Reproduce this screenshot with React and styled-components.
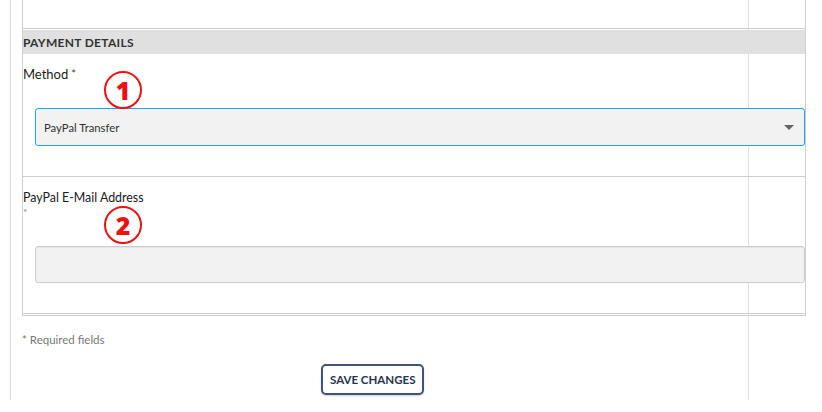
import React from 'react';
import styled, { createGlobalStyle } from 'styled-components';

const GlobalStyle = createGlobalStyle`
  html, body {
    margin: 0;
    padding: 0;
    background: #fff;
    font-family: Lato, 'Open Sans', Arial, sans-serif;
    color: #222;
  }
`;

const Page = styled.div`
  margin-left: 10px;
  width: 812px;
  height: 400px;
  box-sizing: border-box;
  border-left: 1px solid #dcdcdc;
  padding-left: 11px;
  background-image: linear-gradient(to right, transparent 737px, #dedede 737px, #dedede 738px, transparent 738px);
  overflow: hidden;
`;

const Panel = styled.div`
  width: 784px;
  box-sizing: border-box;
  border-left: 1px solid #cfcfcf;
  border-right: 1px solid #cfcfcf;
  border-bottom: 3px double #cfcfcf;
`;

const PrevSection = styled.div`
  height: 28px;
  border-bottom: 1px solid #cdcdcd;
`;

const SectionHeader = styled.div`
  margin-top: 1px;
  height: 24px;
  background: #e0e0e0;
  display: flex;
  align-items: center;
  font-size: 12px;
  font-weight: 700;
  letter-spacing: 0.3px;
  color: #333;
`;

const Field = styled.div`
  position: relative;
  padding: ${(p) => p.$top}px 0 30px 0;
  border-top: ${(p) => (p.$divider ? '1px solid #cdcdcd' : 'none')};
`;

const Label = styled.div`
  font-size: ${(p) => p.$size || 13}px;
  line-height: 16px;
  color: #1a1a1a;
`;

const Star = styled.span`
  font-size: 11px;
  vertical-align: top;
  margin-left: 3px;
  color: #444;
`;

const SubStar = styled.div`
  font-size: 10px;
  line-height: 12px;
  color: #888;
`;

const SelectBox = styled.div`
  margin: ${(p) => p.$gap}px 0 0 12px;
  height: 38px;
  box-sizing: border-box;
  border: 1px solid #1ea1ef;
  border-radius: 3px;
  background: #f2f2f2;
  display: flex;
  align-items: center;
  justify-content: space-between;
  padding: 0 10px 0 8px;
  font-size: 11.3px;
  color: #333;
`;

const Caret = styled.span`
  width: 0;
  height: 0;
  border-left: 5px solid transparent;
  border-right: 5px solid transparent;
  border-top: 5px solid #666;
`;

const TextInput = styled.div`
  margin: ${(p) => p.$gap}px 0 0 12px;
  height: 37px;
  box-sizing: border-box;
  border: 1px solid #cccccc;
  border-radius: 3px;
  background: #f2f2f2;
  box-shadow: inset 0 1px 1px rgba(0, 0, 0, 0.06);
`;

const Marker = styled.div`
  position: absolute;
  left: 81px;
  top: ${(p) => p.$top}px;
  width: 34px;
  height: 34px;
  border: 2px solid #ee1111;
  border-radius: 50%;
  display: flex;
  align-items: center;
  justify-content: center;
  color: #ee1111;
  font-family: 'Open Sans', Arial, sans-serif;
  font-weight: 800;
  font-size: 25px;
  line-height: 1;
  background: transparent;
`;

const Footer = styled.div`
  padding-top: 17px;
`;

const Required = styled.div`
  font-size: 11.5px;
  line-height: 14px;
  color: #777;
`;

const SaveButton = styled.button`
  margin: 17px 0 0 299px;
  height: 31px;
  padding: 0 7px;
  border: 2px solid #3e5578;
  border-radius: 5px;
  background: #fff;
  box-shadow: 0 1px 2px rgba(0, 0, 0, 0.2);
  font-family: Lato, Arial, sans-serif;
  font-size: 11.5px;
  font-weight: 700;
  color: #25344f;
  cursor: pointer;
`;

export default function App() {
  return (
    <>
      <GlobalStyle />
      <Page>
        <Panel>
          <PrevSection />
          <SectionHeader>PAYMENT DETAILS</SectionHeader>

          <Field $top={12}>
            <Label>
              Method<Star>*</Star>
            </Label>
            <Marker $top={17}>1</Marker>
            <SelectBox $gap={26}>
              PayPal Transfer
              <Caret />
            </SelectBox>
          </Field>

          <Field $top={13} $divider>
            <Label $size={12.4}>PayPal E-Mail Address</Label>
            <SubStar>*</SubStar>
            <Marker $top={29}>2</Marker>
            <TextInput $gap={28} />
          </Field>
        </Panel>

        <Footer>
          <Required>* Required fields</Required>
          <SaveButton>SAVE CHANGES</SaveButton>
        </Footer>
      </Page>
    </>
  );
}
